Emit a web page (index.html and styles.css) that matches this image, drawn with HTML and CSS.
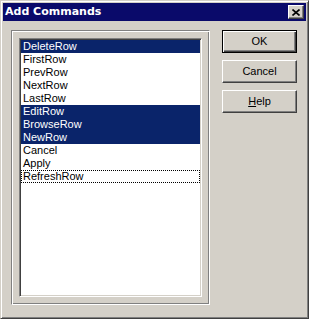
FILE: index.html
```html
<!DOCTYPE html>
<html>
<head>
    <title>Add Commands</title>
    <meta charset="utf-8" />
    <link rel="stylesheet" href="styles.css">
</head>
<body>
    <div class="pencere">
        <div class="baslik">
            <span class="baslik-yazi">Add Commands</span>
            <button class="kapat" title="Close">
                <svg width="8" height="7" viewBox="0 0 8 7">
                    <path d="M0.5 0.5 L7.5 6.5 M7.5 0.5 L0.5 6.5" stroke="#000" stroke-width="1.6" fill="none"/>
                </svg>
            </button>
        </div>
        <div class="icerik">
            <div class="cerceve">
                <ul class="liste">
                    <li class="secili">DeleteRow</li>
                    <li>FirstRow</li>
                    <li>PrevRow</li>
                    <li>NextRow</li>
                    <li>LastRow</li>
                    <li class="secili">EditRow</li>
                    <li class="secili">BrowseRow</li>
                    <li class="secili">NewRow</li>
                    <li>Cancel</li>
                    <li>Apply</li>
                    <li class="odak">RefreshRow</li>
                </ul>
            </div>
            <div class="dugmeler">
                <button class="dugme varsayili">OK</button>
                <button class="dugme">Cancel</button>
                <button class="dugme"><u>H</u>elp</button>
            </div>
        </div>
    </div>
</body>
</html>
```

FILE: styles.css
```css
body {margin: 0; background: #d4d0c8;}

.pencere {
    width: 309px;
    height: 319px;
    box-sizing: border-box;
    padding: 2px;
    background: #d4d0c8;
    border: 1px solid;
    border-color: #d4d0c8 #404040 #404040 #d4d0c8;
    box-shadow: inset 1px 1px #fff, inset -1px -1px #808080;
    font: 11px/13px "Liberation Sans", Arial, sans-serif;
    color: #000;}

.baslik {
    height: 18px;
    background: #0a0a6a;
    display: flex;
    align-items: center;
    justify-content: space-between;
    padding: 0 2px 0 2px;}
.baslik-yazi {
    color: #fff;
    font: bold 11px/18px "DejaVu Sans", Verdana, sans-serif;}
.kapat {
    width: 16px;
    height: 14px;
    padding: 0;
    margin: 0;
    display: flex;
    align-items: center;
    justify-content: center;
    background: #d4d0c8;
    border: 1px solid;
    border-color: #fff #404040 #404040 #fff;
    box-shadow: inset -1px -1px #808080;}

.icerik {
    display: flex;
    padding: 9px 0 0 8px;}

.cerceve {
    width: 199px;
    height: 275px;
    box-sizing: border-box;
    padding: 7px;
    border: 1px solid;
    border-color: #808080 #fff #fff #808080;
    box-shadow: inset 1px 1px #fff, inset -1px -1px #808080;}

.liste {
    list-style: none;
    margin: 0;
    padding: 1px;
    width: 183px;
    height: 259px;
    box-sizing: border-box;
    background: #fff;
    border: 1px solid;
    border-color: #808080 #fff #fff #808080;
    box-shadow: inset 1px 1px #404040, inset -1px -1px #d4d0c8;}
.liste li {
    height: 13px;
    padding-left: 2px;
    white-space: nowrap;}
.liste li.secili {
    background: #0a246a;
    color: #fff;}
.liste li.odak {
    outline: 1px dotted #000;
    outline-offset: -1px;}

.dugmeler {
    display: flex;
    flex-direction: column;
    gap: 7px;
    margin-left: 12px;}
.dugme {
    width: 75px;
    height: 23px;
    padding: 0;
    background: #d4d0c8;
    font: 11px/13px "Liberation Sans", Arial, sans-serif;
    color: #000;
    border: 1px solid;
    border-color: #fff #404040 #404040 #fff;
    box-shadow: inset -1px -1px #808080;}
.dugme.varsayili {
    border: 1px solid #000;
    box-shadow: inset 1px 1px #fff, inset -1px -1px #404040, inset -2px -2px #808080;}
```
